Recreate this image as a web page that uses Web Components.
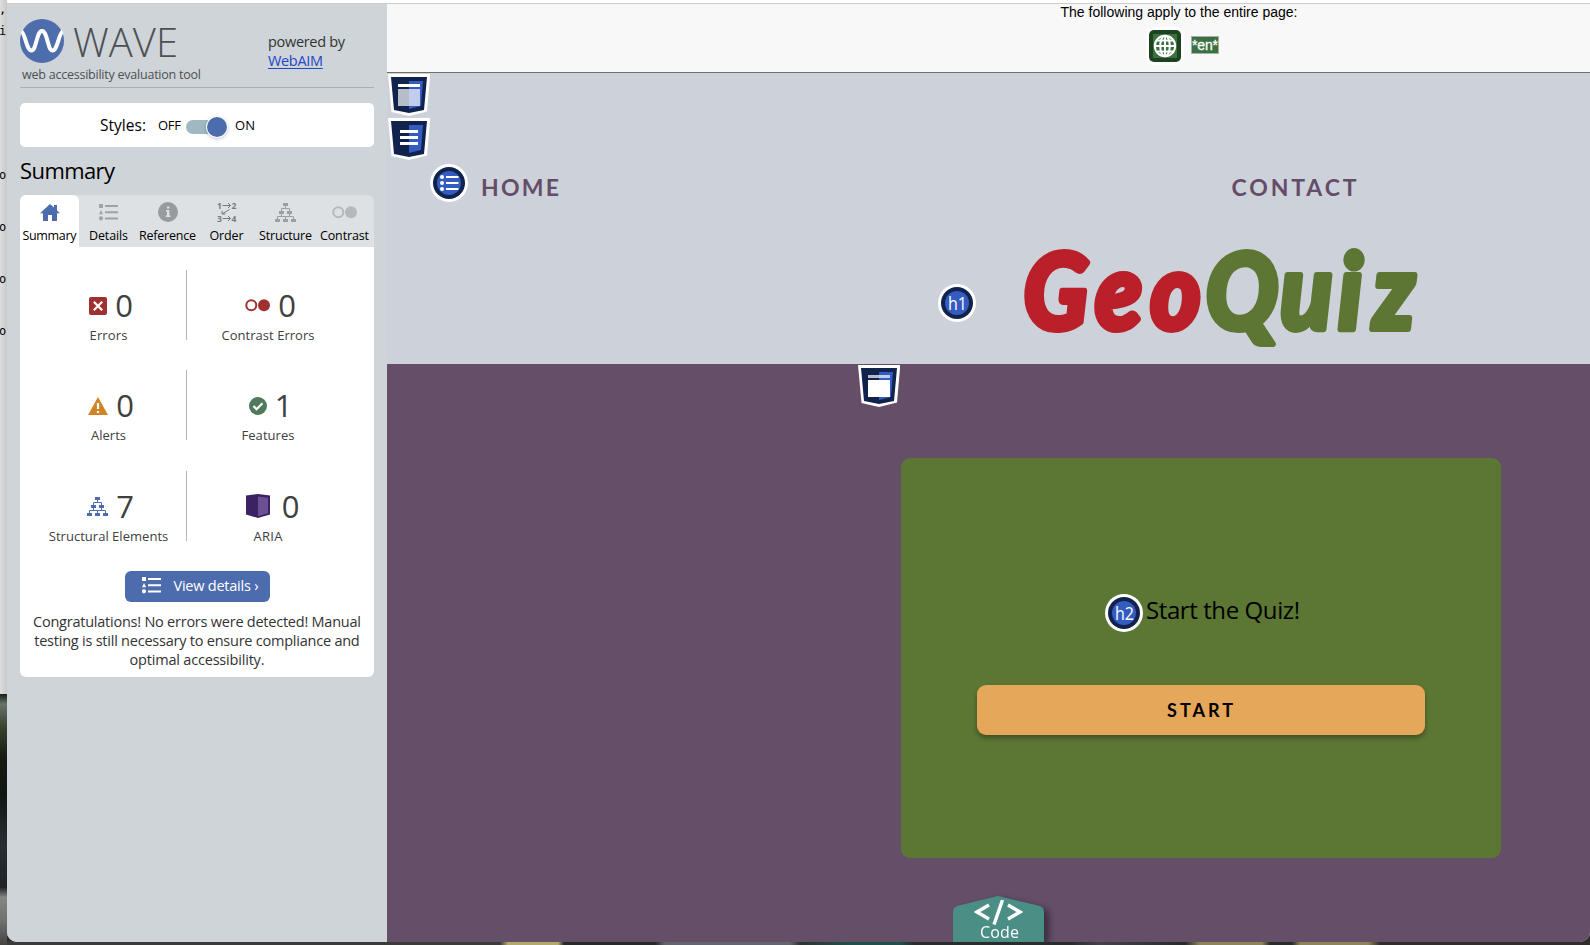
<!DOCTYPE html>
<html lang="en"><head><meta charset="utf-8"><title>WAVE report</title>
<style>html,body{margin:0;height:100%;overflow:hidden;font-family:"Open Sans",sans-serif;background:#2b2d2c}</style></head>
<body><wave-app></wave-app>
<script>
const define=(name,html,after)=>customElements.define(name,class extends HTMLElement{
  connectedCallback(){ if(this.shadowRoot)return; const r=this.attachShadow({mode:'open'}); r.innerHTML=typeof html==='function'?html(this):html; if(after)after(this,r); }
});

/* Text run whose tracking is adjusted to fill the width given in "w". */
define('fit-text','<style>:host{display:inline-block;white-space:nowrap}span{display:inline-block;white-space:pre}:host([link]) span{text-decoration:underline;text-underline-offset:1.500px}</style><span></span>',(h,r)=>{
  const s=r.querySelector('span'); s.textContent=h.getAttribute('t');
  const w=+h.getAttribute('w'), n=s.textContent.length;
  const ls=(w-s.getBoundingClientRect().width)/Math.max(1,n-1);
  s.style.letterSpacing=ls+'px'; s.style.marginRight=-ls+'px';
});

const list=c=>`<svg width="19" height="17" viewBox="0 0 19 17" fill="${c}"><path d="M0 0h4v4H0zM0 10.2 2 6l2.1 4.2zM6 1h13v2H6zM6 7.2h13v2H6zM6 13.5h13v2H6z"/><circle cx="2" cy="14.3" r="2.1"/></svg>`;
const tree=c=>`<svg width="21" height="19" viewBox="0 0 21 19" fill="${c}"><path d="M8 0h5v3H8zM4 8h5v3H4zM12 8h5v3h-5zM0 16h5v3H0zM8 16h5v3H8zM16 16h5v3h-5z"/><path d="M10.5 3v2.5M6.5 8V5.5h8V8M6.500 11v2.500M14.500 11v2.500M2.500 16v-2.500h16V16M10.500 13.500V16" fill="none" stroke="${c}"/></svg>`;
const dots=c=>`<svg width="25" height="13" viewBox="0 0 25 13"><circle cx="6.300" cy="6.300" r="5" fill="none" stroke="${c}" stroke-width="2"/><circle cx="19" cy="6.300" r="6" fill="${c}"/></svg>`;
const icons={
  home:'<svg width="20" height="17" viewBox="0 0 20 17"><path d="M10 0 14 3.600V1h3v5.400l3 2.800h-3V17h-5v-6H8v6H3V9.200H0z" fill="#4c6cae"/></svg>',
  details:list('#a0a3a5'), listw:list('#fff'), structure:tree('#9b9fa1'), treeblue:tree('#4c6cae'), contrast:dots('#b6b9bb'), cerr:dots('#a03130'),
  reference:'<svg width="20" height="20" viewBox="0 0 20 20"><circle cx="10" cy="10" r="10" fill="#989b9e"/><path d="M9 4.500h2.300v2H9zM8 8h3.300v5.500h1.200V15H7.800v-1.500H9v-4H8z" fill="#dfe2e4"/></svg>',
  order:'<svg width="20" height="24" viewBox="0 -2 20 24" font-family="Open Sans" font-weight="700" font-size="8.500" fill="#777a7c"><text x="0" y="6.500">1</text><text x="14.500" y="6.500">2</text><text x="0" y="19.500">3</text><text x="14.500" y="19.500">4</text><path d="M5.500 3.500h8M11 1l2.500 2.500L11 6M5.500 16.500h8M11 14l2.500 2.500-2.500 2.500M12.500 7.500 5 12M5 8.800V12h3.400" fill="none" stroke="#777a7c"/></svg>',
  error:'<svg width="18" height="18" viewBox="0 0 18 18"><rect width="18" height="18" rx="2" fill="#a03130"/><path d="m4.800 4.800 8.400 8.400m0-8.400-8.400 8.400" stroke="#fff" stroke-width="2.200"/></svg>',
  alert:'<svg width="20" height="18" viewBox="0 0 20 18"><path d="m10 0 10 18H0z" fill="#cf8426"/><path d="M8.900 6h2.200v6H8.900zM8.900 14h2.200v2H8.900z" fill="#fff"/></svg>',
  feature:'<svg width="18" height="18" viewBox="0 0 18 18"><circle cx="9" cy="9" r="9" fill="#4f7a5b"/><path d="m4.500 9 3 3.200 6-6" fill="none" stroke="#fff" stroke-width="2.200"/></svg>',
  aria:'<svg width="24" height="24" viewBox="0 0 24 24"><path d="M0 1.500 12 0l12 1.500v19L12 24 0 20.500z" fill="#3b2262"/><path d="m12 2.500 10 1.300v15.400l-10 3z" fill="#6b5194"/></svg>',
  logo:'<svg width="44" height="44" viewBox="0 0 44 44"><circle cx="22" cy="22" r="22" fill="#4d6dad"/><path d="M1.500 12.500C5 14 6.500 31.500 11.500 31.500S16.500 12 22 12s5.500 19.500 10.500 19.500S39 14 42.500 12.500" fill="none" stroke="#fff" stroke-width="4"/></svg>',
  globe:'<svg width="38" height="38" viewBox="0 0 38 38"><rect width="38" height="38" rx="8" fill="#fff"/><rect x="3" y="3" width="32" height="32" rx="5" fill="#1d4321"/><rect x="7" y="7" width="24" height="24" fill="#3b7140"/><g fill="none" stroke="#fff" stroke-width="2"><circle cx="19" cy="19" r="10.200"/><ellipse cx="19" cy="19" rx="4.800" ry="10.200"/><path d="M19 9v20M9 19h20M11 13.500h16M11 24.500h16"/></g></svg>',
  code:'<svg width="49" height="25" viewBox="0 0 49 25"><path d="M15 5 3 12l12 7M34 5l12 7-12 7M28.500 0 20 24.500" fill="none" stroke="#fff" stroke-width="3.400"/></svg>'
};
define('ui-icon',h=>`<style>:host{display:inline-flex;flex:none}svg{display:block}</style>${icons[h.getAttribute('name')]}`);

/* Structure markers laid over the evaluated page. */
const shield={
  header:'<path d="M10 10h22v3H10z" fill="#fff"/><path d="M10 15h11v17H10z" fill="#b7bccb"/><path d="M21 15h11v17H21z" fill="#c2cced"/>',
  nav:'<path d="M12 12h18v3H12zM12 18h18v3H12zM12 24h18v3H12z" fill="#fff"/>',
  main:'<path d="M10 10h11v3H10z" fill="#b7bccb"/><path d="M21 10h11v3H21z" fill="#c2cced"/><path d="M10 15h22v17H10z" fill="#fff"/>'};
define('mark-icon',h=>{const k=h.getAttribute('kind');let g;
  if(shield[k]) g=`<svg width="42" height="42" viewBox="0 0 42 42"><path d="M0 0h42.300l-3.300 37.500L21 42 3.500 38z" fill="#fff"/><path d="M3 3h36l-3 33-15 3-15-3z" fill="#11224d"/><path d="M21 7h14l-2 25-12 3z" fill="#345cc0"/>${shield[k]}</svg>`;
  else g=`<svg width="38" height="38" viewBox="0 0 38 38"><circle cx="19" cy="19" r="19" fill="#fff"/><circle cx="19" cy="19" r="16" fill="#11224d"/><circle cx="19" cy="19" r="12" fill="#345cc0"/>${k==='list'?'<g fill="#fff"><circle cx="12" cy="13" r="2"/><circle cx="12" cy="19" r="2"/><circle cx="12" cy="25" r="2"/><path d="M16 12h12.500v2H16zM16 18h12.500v2H16zM16 24h12.500v2H16z"/></g>':`<text x="19.500" y="26" text-anchor="middle" font-family="Open Sans" font-size="18" textLength="19" lengthAdjust="spacingAndGlyphs" fill="#fff">${k}</text>`}</svg>`;
  return `<style>:host{position:absolute;display:block}svg{display:block}</style>${g}`});

define('tab-item',h=>`<style>:host{flex:1;min-width:0;display:flex;flex-direction:column;align-items:center;height:52px;font-size:12.500px;color:#000;white-space:nowrap}
:host([on]){background:#fff;border-radius:6px 6px 0 0}.i{height:24px;margin-top:5px;display:flex;align-items:center;justify-content:center}.t{line-height:17px;margin-top:3px}</style>
<div class="i"><ui-icon name="${h.getAttribute('icon')}"></ui-icon></div><div class="t"><fit-text t="${h.getAttribute('t')}" w="${h.getAttribute('w')}"></fit-text></div>`);

define('stat-cell',h=>`<style>:host{display:block;height:70px;box-sizing:border-box;padding-top:15px;text-align:center;color:#404040}
.n{display:flex;align-items:center;justify-content:center;gap:${h.getAttribute('gap')||8}px;height:41px;padding-left:${h.getAttribute('dx')||0}px;font-size:31px;line-height:41px}.l{font-size:13px;line-height:20px;margin-top:-1px}</style>
<div class="n"><ui-icon name="${h.getAttribute('icon')}"></ui-icon><span>${h.getAttribute('n')}</span></div><div class="l"><fit-text t="${h.getAttribute('t')}" w="${h.getAttribute('w')}"></fit-text></div>`);

define('wave-brand',`<style>:host{display:grid;grid-template-columns:248px 1fr;height:83px;border-bottom:1px solid #a9b0b4;color:#4d5052}
.row{display:flex;align-items:center;height:44px;margin-top:15px}.w{font-weight:300;font-size:40px;line-height:44px;margin-left:9px;padding-top:1px}.s{font-size:12.500px;line-height:20px;margin:2px 0 0 2px}
.p{padding-top:28px;font-size:14.500px;line-height:19px;color:#333}a{color:#2148c6}</style>
<div><div class="row"><ui-icon name="logo"></ui-icon><fit-text class="w" t="WAVE" w="105"></fit-text></div><div class="s"><fit-text t="web accessibility evaluation tool" w="179"></fit-text></div></div>
<div class="p"><fit-text t="powered by" w="77"></fit-text><br><a href="#"><fit-text link t="WebAIM" w="55"></fit-text></a></div>`);

define('style-toggle',`<style>:host{display:flex;align-items:center;box-sizing:border-box;height:44px;margin-top:15px;padding-left:80px;background:#fff;border-radius:5px;font-size:13px;color:#000}
.a{font-size:15.500px;margin-right:12px;line-height:44px}.tr{width:41px;height:14px;border-radius:7px;background:#9fb9c3;margin:3px 8px 0 5px;display:flex;align-items:center;justify-content:flex-end}
.k{width:20px;height:20px;border-radius:50%;background:#4c6cae;box-shadow:0 0 0 1px #fff,0 1px 4px #0006}</style>
<fit-text class="a" t="Styles:" w="46"></fit-text><fit-text t="OFF" w="23"></fit-text><div class="tr"><div class="k"></div></div><fit-text t="ON" w="20"></fit-text>`);

define('wave-sidebar',`<style>:host{display:block;box-sizing:border-box;width:380px;padding:0 13px;background:#ced4d8;color:#000}
h2{margin:0;font:400 22px/46px "Open Sans",sans-serif;height:48px}.tabs{display:flex;background:#dde1e4;border-radius:6px 6px 0 0}
.panel{background:#fff;border-radius:0 0 6px 6px;height:430px;box-sizing:border-box;padding-top:23px;color:#333}
.g{display:grid;grid-template-columns:156px 162px;grid-template-rows:repeat(3,70px);row-gap:30.400px;padding-left:11px}.g :nth-child(odd){border-right:1px solid #b5b5b5;box-sizing:border-box}
button{display:flex;align-items:center;width:145px;height:31px;margin:30px auto 0;padding:0 0 1px 17px;border:0;border-radius:6px;background:#4c6cae;color:#fff;font:14.500px "Open Sans",sans-serif;gap:13px}
.m{font-size:14.500px;line-height:19px;text-align:center;margin-top:10px}.m fit-text{display:block}</style>
<wave-brand></wave-brand><style-toggle></style-toggle><h2><fit-text t="Summary" w="95"></fit-text></h2>
<div class="tabs"><tab-item on icon="home" t="Summary" w="54"></tab-item><tab-item icon="details" t="Details" w="39"></tab-item><tab-item icon="reference" t="Reference" w="57"></tab-item><tab-item icon="order" t="Order" w="34"></tab-item><tab-item icon="structure" t="Structure" w="53"></tab-item><tab-item icon="contrast" t="Contrast" w="49"></tab-item></div>
<div class="panel"><div class="g"><stat-cell icon="error" n="0" t="Errors" w="38" dx="5"></stat-cell><stat-cell icon="cerr" n="0" t="Contrast Errors" w="93" dx="5"></stat-cell>
<stat-cell icon="alert" n="0" t="Alerts" w="35" dx="5"></stat-cell><stat-cell icon="feature" n="1" t="Features" w="53" dx="5"></stat-cell>
<stat-cell icon="treeblue" n="7" t="Structural Elements" w="119.500" dx="4"></stat-cell><stat-cell icon="aria" n="0" t="ARIA" w="29" dx="9" gap="12"></stat-cell></div>
<button><ui-icon name="listw"></ui-icon><fit-text t="View details ›" w="85"></fit-text></button>
<div class="m"><fit-text t="Congratulations! No errors were detected! Manual" w="328"></fit-text><fit-text t="testing is still necessary to ensure compliance and" w="325.500"></fit-text><fit-text t="optimal accessibility." w="135"></fit-text></div></div>`);

define('page-notice',`<style>:host{display:block;box-sizing:border-box;height:69px;border-bottom:1px solid #6d7268;background:#f8f8f8;text-align:center;font:14px/17px "Liberation Sans",sans-serif;color:#000;padding:0 0 0 381px}
.r{display:flex;justify-content:center;align-items:center;gap:7px;padding-left:7px;height:38px;margin-top:6px}.en{display:block;box-sizing:border-box;width:28px;height:18px;border:1px solid #a6afa6;background:#3b7140;color:#fff;line-height:16px;margin-top:-2px;-webkit-text-stroke:.3px #fff}</style>
<fit-text t="The following apply to the entire page:" w="237"></fit-text><div class="r"><ui-icon name="globe"></ui-icon><div class="en"><fit-text t="*en*" w="26"></fit-text></div></div>`);

define('geo-header',`<style>:host{display:block;position:relative;height:291px;background:#cdd1d9}
nav{display:flex;gap:672.500px;padding:96px 0 0 94px;font:700 23px/37px Lato,sans-serif;color:#654d69}
h1{margin:32px 0 0 632px;height:130px}svg{display:block;overflow:visible}
text{font-family:Lato,sans-serif;font-weight:900;font-style:italic;stroke-width:6;stroke-linejoin:round;paint-order:stroke}</style>
<nav><fit-text t="HOME" w="78"></fit-text><fit-text t="CONTACT" w="125"></fit-text></nav>
<h1><svg width="410" height="130" viewBox="0 238 410 130"><g transform="scale(.92 1)"><text font-size="104" y="329.500" x="5 83 143" fill="#b92029" stroke="#b92029">Geo</text><text font-size="104" y="329.500" x="203 284 347 385" fill="#5d7633" stroke="#5d7633">Quiz</text></g></svg></h1>
<mark-icon kind="header" style="left:1px;top:1px"></mark-icon><mark-icon kind="nav" style="left:1px;top:45px"></mark-icon><mark-icon kind="list" style="left:43px;top:91px"></mark-icon><mark-icon kind="h1" style="left:551px;top:211px"></mark-icon>`);

define('quiz-card',`<style>:host{display:flex;flex-direction:column;align-items:center;box-sizing:border-box;position:relative;width:600px;height:400px;padding-top:130px;border-radius:9px;background:#5c7633;color:#000}
h2{margin:0 0 0 44px;font:400 24px/44px "Open Sans",sans-serif}button{width:448px;height:50px;margin-top:53px;padding:0 2px 0 0;border:0;border-radius:9px;background:#e5a75a;box-shadow:0 3px 5px #0005;font:700 18px/51px Lato,sans-serif;color:#000}</style>
<h2><fit-text t="Start the Quiz!" w="154"></fit-text></h2><button><fit-text t="START" w="66"></fit-text></button><mark-icon kind="h2" style="left:204px;top:136px"></mark-icon>`);

define('code-tab',`<style>:host{position:absolute;left:566px;bottom:0;width:91px;height:46px;filter:drop-shadow(5px 3px 3px #0006)}
div{height:46px;background:#4b8e85;clip-path:polygon(0 15px,1px 12px,4px 10px,45px 0,87px 10px,90px 12px,91px 15px,91px 46px,0 46px);display:flex;flex-direction:column;align-items:center;color:#fff;font-size:16px;line-height:16px}ui-icon{margin:4px 0 0}fit-text{margin:-1px 0 0 2px}</style>
<div><ui-icon name="code"></ui-icon><fit-text t="Code" w="39"></fit-text></div>`);

define('geo-page',`<style>:host{display:flex;flex-direction:column;flex:1;min-width:0;position:relative}main{flex:1;position:relative;background:#644e68;padding:94px 0 0 514px}</style>
<page-notice></page-notice><geo-header></geo-header><main><quiz-card></quiz-card><mark-icon kind="main" style="left:471px;top:1px"></mark-icon><code-tab></code-tab></main>`);

define('desk-edge',`<style>:host{display:block;width:7px;height:945px;overflow:hidden;background:linear-gradient(90deg,#dedede,#c9c9c9) 0 0/7px 694px no-repeat,linear-gradient(#182016,#68736a 4%,#39452f 13%,#171b12 25%,#111512 40%,#292e31 60%,#202324 77%,#858783 81%,#70736f 90%,#444 100%) 0 694px/7px 251px no-repeat;font:12px/18px "DejaVu Sans Mono",monospace;color:#000}
div{margin-left:-1px;height:52px}.c{height:22px;margin:0 0 0 -1px}.i{height:144px}</style><div class="c">,</div><div class="i">i</div><div>o</div><div>o</div><div>o</div><div>o</div>`);

define('wave-app',`<style>:host{display:flex;width:1590px;height:945px;background:linear-gradient(90deg,#3b3b39 0 500px,#b2aa6c 508px 558px,#272a29 564px 655px,#62666c 665px 790px,#303431 800px,#215049 850px 900px,#292d2b 915px 1070px,#45424a 1100px,#272b29 1185px,#8b8559 1200px 1262px,#292c2a 1270px 1292px,#8b8559 1300px 1368px,#302d2b 1380px) 0 100%/100% 4px no-repeat}
.win{display:flex;box-sizing:border-box;width:1583px;height:942px;border-top:3px solid #fff;box-shadow:inset 0 1px #cbcdce;border-radius:0 0 10px 10px;overflow:hidden;padding-top:1px;background:#c9cbcc}</style>
<desk-edge></desk-edge><div class="win"><wave-sidebar></wave-sidebar><geo-page></geo-page></div>`);
</script></body></html>
